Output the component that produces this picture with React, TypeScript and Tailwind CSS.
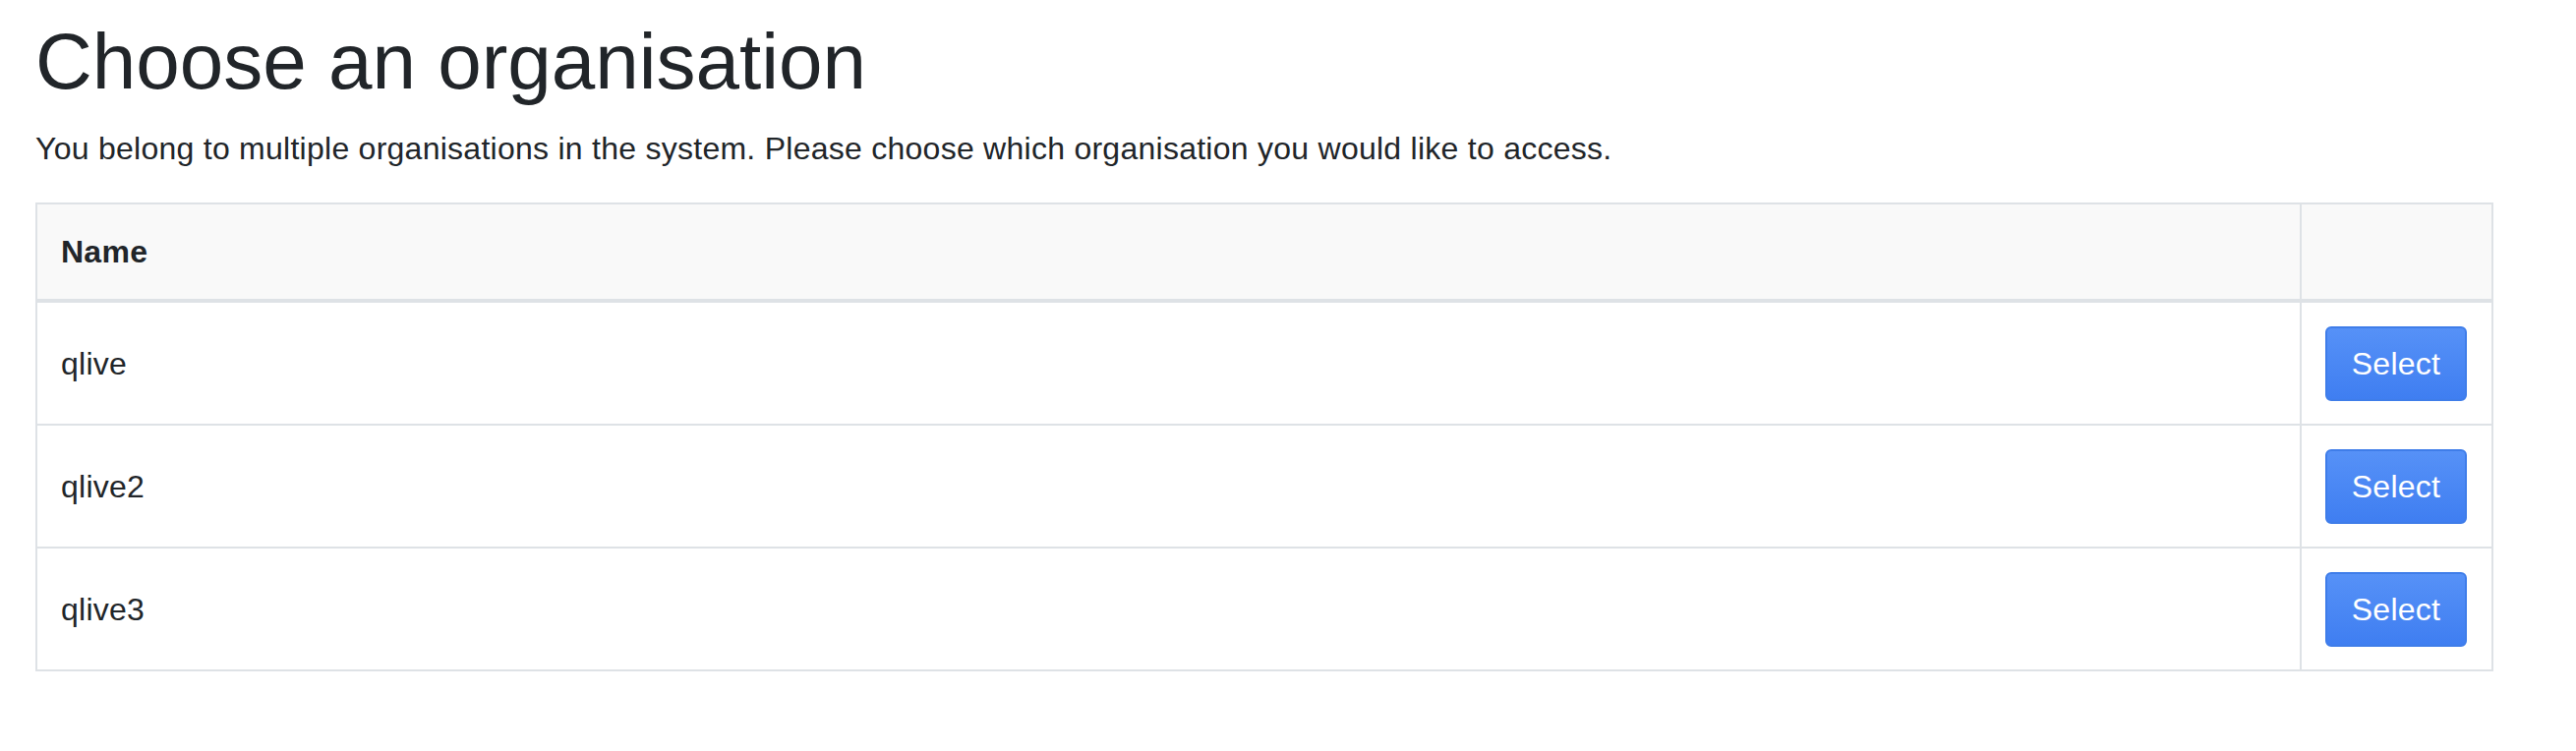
const organisations = ['qlive', 'qlive2', 'qlive3'];

export default function App() {
  return (
    <div
      className="min-h-screen bg-white pl-[36px] pt-[15px] text-[#212529]"
      style={{ fontFamily: '"Liberation Sans", Arial, sans-serif' }}
    >
      <h1 className="mb-[16px] text-[80px] font-normal leading-[96px]">Choose an organisation</h1>
      <p className="mb-[31px] text-[32px] leading-[48px] tracking-[0.26px]">
        You belong to multiple organisations in the system. Please choose which organisation you would like to access.
      </p>

      <table className="w-[2500px] border-collapse text-[32px] leading-[48px] tracking-[0.26px]">
        <thead>
          <tr className="bg-[#f9f9f9]">
            <th className="border-2 border-b-4 border-[#dee2e6] px-[24px] py-[24px] text-left font-bold">Name</th>
            <th className="w-[195px] border-2 border-b-4 border-[#dee2e6] px-[24px] py-[24px]"></th>
          </tr>
        </thead>
        <tbody>
          {organisations.map((org) => (
            <tr key={org}>
              <td className="border-2 border-[#dee2e6] px-[24px] pt-[24px] pb-[23px] align-middle">{org}</td>
              <td className="border-2 border-[#dee2e6] px-[24px] pt-[24px] pb-[23px]">
                <button
                  type="button"
                  className="h-[76px] w-[144px] rounded-[6px] border-2 border-[#3f7de9] bg-gradient-to-b from-[#5691f7] to-[#3f7ef1] text-[32px] leading-[48px] text-white"
                >
                  Select
                </button>
              </td>
            </tr>
          ))}
        </tbody>
      </table>
    </div>
  );
}
